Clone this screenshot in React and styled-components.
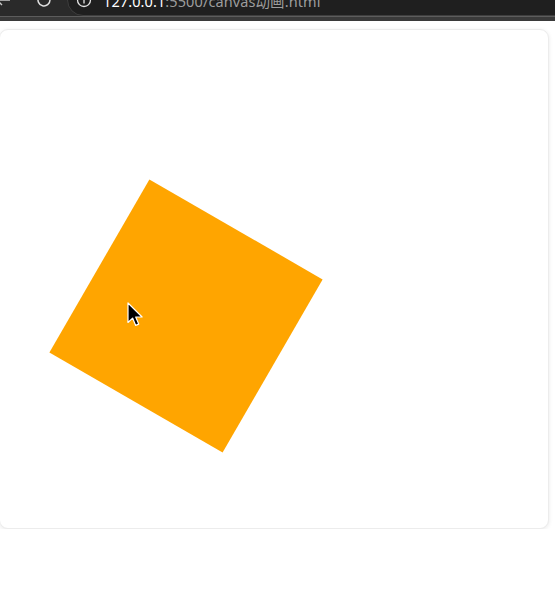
import React from 'react';
import styled, {createGlobalStyle} from 'styled-components';

const GlobalStyle = createGlobalStyle`
    html, body {
        margin: 0;
        padding: 0;
        background: #ffffff;
        font-family: "Noto Sans", "Noto Sans CJK SC", sans-serif;
    }
`

const Chrome = styled.div`
    height: 16px;
    background: #2a2a2a;
    border-bottom: 1px solid #5c5c5c;
    overflow: hidden;
`

const ChromeRow = styled.div`
    display: flex;
    align-items: center;
    height: 32px;
    margin-top: -16px;
`

const NavIcon = styled.div`
    width: 18px;
    height: 18px;
    margin-left: ${({offset}) => offset}px;
    color: #c8c8c8;
    display: flex;
    flex: none;
`

const AddressBar = styled.div`
    flex: 1;
    display: flex;
    align-items: center;
    height: 30px;
    margin-left: 14px;
    margin-right: -40px;
    padding-left: 8px;
    background: #1f1f1f;
    border: 1px solid #3e3e3e;
    border-radius: 16px;
    gap: 11px;
`

const Url = styled.span`
    font-size: 14.5px;
    color: #9d9d9d;
    white-space: nowrap;
    letter-spacing: 0.1px;
`

const Host = styled.span`
    color: #ffffff;
`

const ChromeShade = styled.div`
    height: 4px;
    background: #3a3a3a;
`

const Page = styled.main`
    padding: 8px 6px 0 0;
`

const Card = styled.section`
    position: relative;
    width: 548px;
    height: 498px;
    margin-left: -1px;
    border: 1px solid #ececec;
    border-radius: 9px;
    box-shadow: 0 1px 4px rgba(0, 0, 0, 0.09);
    background: #ffffff;
    overflow: hidden;
`

const Canvas = styled.svg`
    display: block;
`

const Cursor = styled.svg`
    position: absolute;
    left: 127px;
    top: 272px;
`

function App() {
    return (
        <>
            <GlobalStyle />
            <Chrome>
                <ChromeRow>
                    <NavIcon offset={-6}>
                        <svg width="18" height="18" viewBox="0 0 18 18" fill="none" stroke="currentColor" strokeWidth="1.4">
                            <path d="M16 9H3M8 4L3 9l5 5" />
                        </svg>
                    </NavIcon>
                    <NavIcon offset={23}>
                        <svg width="18" height="18" viewBox="0 0 18 18" fill="none" stroke="#e0e0e0" strokeWidth="1.5">
                            <path d="M15 9a6 6 0 1 1-2-4.5" />
                            <path d="M13.5 2v3h-3" />
                        </svg>
                    </NavIcon>
                    <AddressBar>
                        <svg width="16" height="16" viewBox="0 0 16 16" fill="none" stroke="#e6e6e6" strokeWidth="1.3">
                            <circle cx="8" cy="8" r="6.5" />
                            <path d="M8 7v4.5" />
                            <circle cx="8" cy="4.8" r="0.4" fill="#e6e6e6" />
                        </svg>
                        <Url><Host>127.0.0.1</Host>:5500/canvas动画.html</Url>
                    </AddressBar>
                </ChromeRow>
            </Chrome>
            <ChromeShade />
            <Page>
                <Card>
                    <Canvas width="548" height="498">
                        <rect x="-100" y="-100" width="200" height="200" fill="#FFA500"
                              transform="translate(186 286) rotate(30)" />
                    </Canvas>
                    <Cursor width="16" height="26" viewBox="0 0 16 26">
                        <path d="M1 1v19.5l4.6-4.4 3.1 7.3 3-1.3-3-7.1h6.4z" fill="#000" stroke="#fff" strokeWidth="1.2" strokeLinejoin="round" />
                    </Cursor>
                </Card>
            </Page>
        </>
    );
}

export default App;
